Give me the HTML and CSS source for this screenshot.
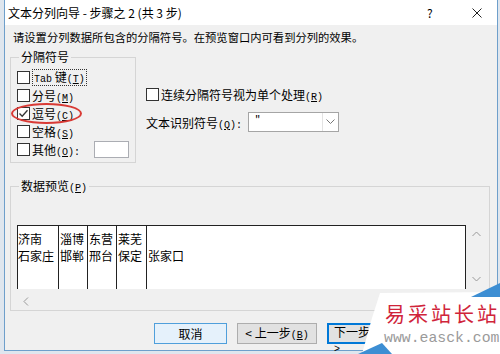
FILE: index.html
```html
<!DOCTYPE html>
<html lang="zh-CN">
<head>
  <meta charset="UTF-8"/>
  <meta name="viewport" content="width=device-width, initial-scale=1.0"/>
  <title>文本分列向导 - 步骤之 2 (共 3 步)</title>
  <link rel="stylesheet" href="styles.css">
</head>
<body>

  <div class="dialog">
    <div class="titlebar">
      <span class="title">文本分列向导 - 步骤之 2 (共 3 步)</span>
      <span class="help">?</span>
      <svg class="close" width="10" height="10" viewBox="0 0 10 10">
        <path d="M0.5 0.5 L9.5 9.5 M9.5 0.5 L0.5 9.5" stroke="#222" stroke-width="1"/>
      </svg>
    </div>

    <div class="client">
      <p class="intro">请设置分列数据所包含的分隔符号。在预览窗口内可看到分列的效果。</p>

      <div class="top">
        <!-- 分隔符号 -->
        <fieldset class="delims">
          <legend>分隔符号</legend>
          <label class="chk"><span class="box"></span><span class="focus"><span class="lat">Tab</span> 键<span class="lat">(<u>T</u>)</span></span></label>
          <label class="chk"><span class="box"></span><span>分号<span class="lat">(<u>M</u>)</span></span></label>
          <label class="chk marked">
            <span class="box"><svg width="11" height="11" viewBox="0 0 11 11"><path d="M1.5 5.5 L4.2 8.3 L9.5 2.2" fill="none" stroke="#333" stroke-width="1.3"/></svg></span>
            <span>逗号<span class="lat">(<u>C</u>)</span></span>
            <span class="ring"></span>
          </label>
          <label class="chk"><span class="box"></span><span>空格<span class="lat">(<u>S</u>)</span></span></label>
          <label class="chk"><span class="box"></span><span>其他<span class="lat">(<u>O</u>):</span></span><span class="other"></span></label>
        </fieldset>

        <div class="options">
          <label class="chk"><span class="box"></span><span>连续分隔符号视为单个处理<span class="lat">(<u>R</u>)</span></span></label>
          <div class="qualifier">
            <span class="q-label">文本识别符号<span class="lat">(<u>Q</u>):</span></span>
            <div class="combo">
              <span class="combo-val">"</span>
              <span class="combo-btn">
                <svg width="9" height="6" viewBox="0 0 9 6"><path d="M0.5 0.5 L4.5 4.5 L8.5 0.5" fill="none" stroke="#777" stroke-width="1"/></svg>
              </span>
            </div>
          </div>
        </div>
      </div>

      <!-- 数据预览 -->
      <fieldset class="preview">
        <legend>数据预览<span class="lat">(<u>P</u>)</span></legend>
        <div class="scroller">
          <div class="sheet">
            <div class="col c1"><div>济南</div><div>石家庄</div></div>
            <div class="col c2"><div>淄博</div><div>邯郸</div></div>
            <div class="col c3"><div>东营</div><div>邢台</div></div>
            <div class="col c4"><div>莱芜</div><div>保定</div></div>
            <div class="col c5"><div>&nbsp;</div><div>张家口</div></div>
          </div>
          <div class="vbar">
            <svg width="9" height="6" viewBox="0 0 9 6"><path d="M0.5 5 L4.5 1 L8.5 5" fill="none" stroke="#999" stroke-width="1"/></svg>
            <svg width="9" height="6" viewBox="0 0 9 6"><path d="M0.5 1 L4.5 5 L8.5 1" fill="none" stroke="#999" stroke-width="1"/></svg>
          </div>
          <div class="hbar">
            <svg width="6" height="9" viewBox="0 0 6 9"><path d="M5 0.5 L1 4.5 L5 8.5" fill="none" stroke="#999" stroke-width="1"/></svg>
          </div>
        </div>
      </fieldset>

      <div class="buttons">
        <button class="btn hover">取消</button>
        <button class="btn wide">&lt; 上一步<span class="lat">(<u>B</u>)</span></button>
        <button class="btn default">下一步<span class="lat">(<u>N</u>) &gt;</span></button>
      </div>
    </div>
  </div>

  <!-- 水印 -->
  <div class="watermark">
    <svg class="wm-bg" width="142" height="74" viewBox="0 0 142 74">
      <polygon points="22,13 142,12 142,74 4,74 14,38" fill="#fff"/>
      <polygon points="113,17 142,3 142,17" fill="#3d8ed3"/>
      <polygon points="0,74 24,63 34,74" fill="#3d8ed3"/>
    </svg>
    <div class="wm-cn">易采站长站</div>
    <div class="wm-en">www.easck.com</div>
  </div>

</body>
</html>
```

FILE: styles.css
```css
* {
  margin: 0; padding: 0; box-sizing: border-box;
}
body {
  width: 500px; height: 354px;
  overflow: hidden;
  position: relative;
  background: #dfe6ee;
  font-family: "Noto Sans CJK SC", sans-serif;
  font-size: 12px;
  color: #000;
}
.lat {
  font-family: "Liberation Mono", monospace;
  font-size: 10px;
  line-height: 1;
}
u { text-decoration: underline; }

.dialog {
  margin-left: 4px;
  width: 494px;
  height: 351px;
  border: 1px solid #6e9fcb;
  border-top: none;
  background: #f0f0f0;
}
.titlebar {
  height: 25px;
  background: #fff;
  display: flex;
  align-items: center;
  padding-left: 3px;
}
.title {
  font-size: 12px;
  flex: 1;
  line-height: 16px;
}
.help {
  font-size: 12px;
  width: 8px;
  margin-right: 37px;
}
.close {
  margin-right: 15px;
  margin-top: 1px;
}

.client {
  padding: 0 0 0 5px;
}
.intro {
  font-size: 11.3px;
  line-height: 16px;
  margin-top: 4px;
  padding-left: 3px;
}

.top {
  display: flex;
  margin-top: 5px;
}
fieldset {
  border: 1px solid #d5d5d5;
}
legend {
  line-height: 14px;
  padding: 0 2px;
  margin-left: 2px;
}
.delims {
  width: 126px;
  height: 113px;
  padding: 4px 0 0 6px;
}
.chk {
  display: flex;
  align-items: center;
  height: 18px;
  gap: 2px;
  position: relative;
}
.box {
  width: 13px; height: 13px;
  border: 1px solid #333;
  background: #fff;
  display: flex;
  align-items: center;
  justify-content: center;
}
.focus {
  border: 1px dotted #333;
  padding: 0 1px;
  line-height: 14px;
}
.ring {
  position: absolute;
  left: -6px; top: -1px;
  width: 71px; height: 21px;
  border: 2px solid #d93a35;
  border-radius: 50%;
}
.other {
  width: 35px; height: 17px;
  margin-left: 12px;
  background: #fff;
  border: 1px solid #abadb3;
}

.options {
  margin-left: 10px;
  padding-top: 35px;
}
.qualifier {
  display: flex;
  align-items: center;
  margin-top: 9px;
}
.q-label {
  width: 102px;
}
.combo {
  width: 91px; height: 20px;
  border: 1px solid #a5a5a5;
  background: #fff;
  display: flex;
}
.combo-val {
  flex: 1;
  padding-left: 6px;
  line-height: 14px;
  font-size: 11px;
}
.combo-btn {
  width: 16px;
  border-left: 1px solid #e3e3e3;
  display: flex;
  align-items: center;
  justify-content: center;
}

.preview {
  margin-top: 16px;
  width: 480px;
  height: 132px;
  padding: 31px 0 0 6px;
}
.scroller {
  display: grid;
  grid-template-columns: 449px 20px;
  grid-template-rows: 64px 15px;
}
.sheet {
  background: #fff;
  border: 1px solid #222;
  border-bottom: none;
  display: flex;
}
.col {
  padding-top: 4px;
  line-height: 17px;
  border-right: 1px solid #222;
  padding-left: 1px;
  white-space: nowrap;
}
.c1 { width: 41px; padding-left: 0; }
.c2 { width: 29px; }
.c3 { width: 29px; }
.c4 { width: 30px; }
.c5 { border-right: none; flex: 1; }
.vbar {
  display: flex;
  flex-direction: column;
  justify-content: space-between;
  align-items: center;
  padding: 6px 0 7px;
}
.hbar {
  grid-column: 1 / 3;
  padding: 3px 0 0 6px;
}

.buttons {
  display: flex;
  gap: 10px;
  margin-top: 12px;
  padding-left: 144px;
}
.btn {
  width: 73px; height: 21px;
  font-family: "Noto Sans CJK SC", sans-serif;
  font-size: 12px;
  line-height: 14px;
  background: #e1e1e1;
  border: 1px solid #adadad;
  color: #000;
  flex-shrink: 0;
}
.btn.wide {
  width: 80px;
}
.btn.hover {
  background: #e5f1fb;
  border-color: #4f9fdb;
}
.btn.default {
  border: 2px solid #0078d7;
  text-align: left;
  padding-left: 5px;
}

.watermark {
  position: absolute;
  left: 358px; top: 280px;
  width: 142px; height: 74px;
}
.wm-bg {
  position: absolute;
  left: 0; top: 0;
}
.wm-cn {
  position: relative;
  margin: 21px 0 0 27px;
  font-family: "Noto Sans CJK SC", serif;
  font-size: 20px;
  letter-spacing: 3px;
  line-height: 26px;
  color: #d0243a;
}
.wm-en {
  position: relative;
  margin: 3px 0 0 26px;
  font-family: "Liberation Mono", monospace;
  font-size: 14.8px;
  line-height: 16px;
  color: #9a9a9a;
}
```
